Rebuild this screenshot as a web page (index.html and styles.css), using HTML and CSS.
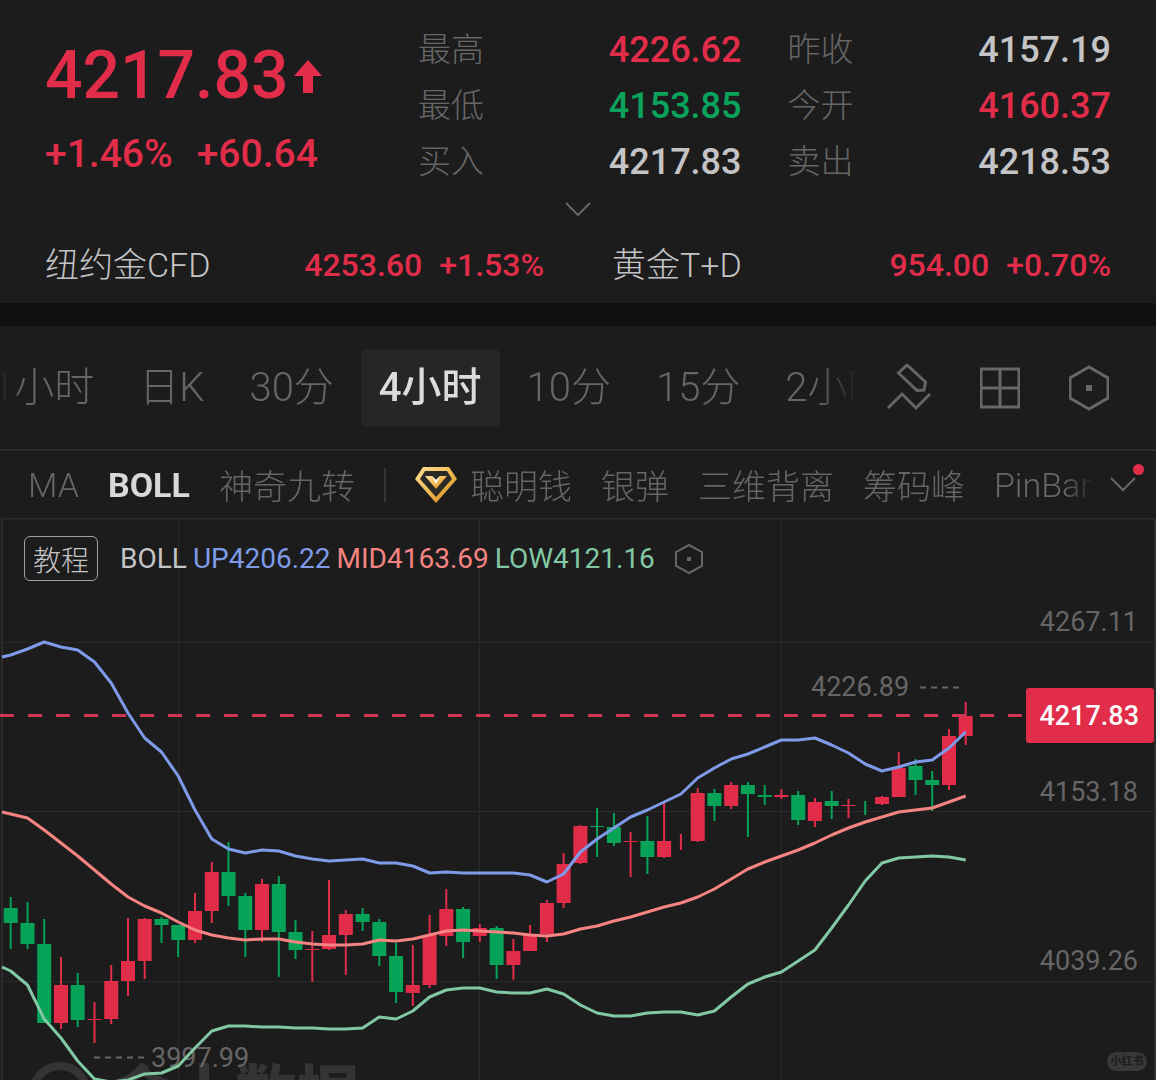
FILE: index.html
```
<!DOCTYPE html>
<html lang="zh-CN">

<head>
    <meta charset="UTF-8">
    <meta name="viewport" content="width=device-width, initial-scale=1.0">
    <title>现货黄金</title>
    <link rel="stylesheet" href="styles.css">
</head>

<body>
    <header class="quote">
        <div class="summary">
            <div class="price">
                <div class="last num">
                    <span>4217.83</span>
                    <svg class="arrow" viewBox="0 0 28 33">
                        <path d="M14 0L28 16H19V33H9V16H0z" />
                    </svg>
                </div>
                <div class="change num"><span>+1.46%</span><span>+60.64</span></div>
            </div>
            <dl class="detail">
                <div><dt>最高</dt><dd class="num up">4226.62</dd></div>
                <div><dt>昨收</dt><dd class="num">4157.19</dd></div>
                <div><dt>最低</dt><dd class="num down">4153.85</dd></div>
                <div><dt>今开</dt><dd class="num up">4160.37</dd></div>
                <div><dt>买入</dt><dd class="num">4217.83</dd></div>
                <div><dt>卖出</dt><dd class="num">4218.53</dd></div>
            </dl>
        </div>
        <button class="expand" type="button" aria-label="展开">
            <svg viewBox="0 0 26 14"><path d="M1 1l12 12L25 1" /></svg>
        </button>
        <div class="related">
            <a href="#" class="item">
                <span class="name">纽约金CFD</span>
                <span class="num up">4253.60</span>
                <span class="num up">+1.53%</span>
            </a>
            <a href="#" class="item">
                <span class="name">黄金T+D</span>
                <span class="num up">954.00</span>
                <span class="num up">+0.70%</span>
            </a>
        </div>
    </header>

    <nav class="period">
        <div class="tabs">
            <button type="button">1小时</button>
            <button type="button">日K</button>
            <button type="button">30分</button>
            <button type="button" class="active">4小时</button>
            <button type="button">10分</button>
            <button type="button">15分</button>
            <button type="button">2小时</button>
        </div>
        <div class="tools">
            <button type="button" aria-label="画线">
                <svg width="44" height="48" viewBox="0 0 44 48">
                    <path d="M20 1L38.500 18L37 26L30 26.500L11.500 9zM1 44L15 30L29 44L43 30" />
                </svg>
            </button>
            <button type="button" aria-label="布局">
                <svg width="40" height="48" viewBox="0 0 40 48">
                    <path d="M1 5H39V43H1zM20 5V43M1 24H39" />
                </svg>
            </button>
            <button type="button" aria-label="设置">
                <svg width="40" height="48" viewBox="0 0 40 48">
                    <path d="M20 3L39 14V34L20 45L1 34V14z" />
                    <rect class="dot" x="17" y="21" width="6" height="6" />
                </svg>
            </button>
        </div>
    </nav>

    <nav class="indicator">
        <div class="list">
            <button type="button">MA</button>
            <button type="button" class="active">BOLL</button>
            <button type="button">神奇九转</button>
            <i class="line"></i>
            <button type="button" class="vip">
                <svg width="42" height="38" viewBox="0 0 42 38">
                    <defs>
                        <linearGradient id="gold" x1="0" y1="0" x2="1" y2="1">
                            <stop offset="0" stop-color="#ffdf9a" />
                            <stop offset="0.5" stop-color="#f2bd55" />
                            <stop offset="1" stop-color="#c97f08" />
                        </linearGradient>
                    </defs>
                    <path fill="url(#gold)" d="M8 1H34L42 13L21 37L0 13z" />
                    <path fill="#2c2a27" d="M10 5H32L37 13L21 31L5 13z" />
                    <path fill="url(#gold)" d="M10 10H17L21 14L25 10H32L21 23z" />
                    <path fill="#fff" d="M17 10L21 18L25 10L21 14z" />
                </svg>
                聪明钱
            </button>
            <button type="button">银弹</button>
            <button type="button">三维背离</button>
            <button type="button">筹码峰</button>
            <button type="button">PinBar</button>
        </div>
        <button class="more" type="button" aria-label="更多指标">
            <svg viewBox="0 0 26 15"><path d="M1 1l12 12L25 1" /></svg>
        </button>
    </nav>

    <main class="chart">
        <div class="legend">
            <button type="button" class="course">教程</button>
            <span>BOLL</span>
            <span class="c-up">UP4206.22</span>
            <span class="c-mid">MID4163.69</span>
            <span class="c-low">LOW4121.16</span>
            <svg width="28" height="32" viewBox="0 0 28 32">
                <path d="M14 2L27 9V23L14 30L1 23V9z" />
                <rect class="dot" x="12" y="14" width="4" height="4" />
            </svg>
        </div>
        <svg class="kline" viewBox="0 518 1156 562">
            <g class="watermark">
                <circle cx="60" cy="1093" r="27" />
                <text x="111" y="1117">金十数据</text>
            </g>
            <path class="grid" d="M178.500 519V1080M479.500 519V1080M781.500 519V1080M2 642.500H1154M2 811.500H1154M2 981.500H1154" />
            <path class="frame" d="M0 518.500H1156M2 519V1080M1155 519V1080" />
            <g class="mark">
                <path d="M94 1057.500H145M920 687.500H961" />
                <text x="151" y="1067">3997.99</text>
                <text x="811" y="696">4226.89</text>
            </g>
            <g id="candles"></g>
            <path class="now" d="M0 715.500H1026" />
            <g id="lines"></g>
            <g class="axis">
                <text x="1138" y="631">4267.11</text>
                <text x="1138" y="801">4153.18</text>
                <text x="1138" y="970">4039.26</text>
                <rect x="1026" y="688" width="128" height="55" rx="3" />
                <text class="cur" x="1139" y="725">4217.83</text>
            </g>
        </svg>
        <span class="source">小红书</span>
    </main>

    <script src="script.js"></script>
</body>

</html>
```

FILE: styles.css
```
* {
    margin: 0;
    padding: 0;
    box-sizing: border-box;
}

body {
    background: #1c1c1d;
    color: #c4c4c6;
    font-family: Roboto, "Noto Sans CJK SC", sans-serif;
    font-weight: 300;
    overflow-x: hidden;
}

button {
    border: 0 none;
    background: none;
    color: inherit;
    font: inherit;
    white-space: nowrap;
    cursor: pointer;
}

a {
    color: inherit;
    text-decoration: none;
}

svg {
    display: block;
    fill: none;
    stroke: #666;
    stroke-width: 2;
}

svg .dot {
    fill: #666;
    stroke: none;
}

.num {
    font-weight: 500;
}

.up {
    color: #e12d4a;
}

.down {
    color: #0aa35c;
}

/* 报价 */
.quote {
    padding: 22px 45px 0;
    height: 326px;
    border-bottom: 23px solid #111112;
}

.summary {
    display: flex;
    justify-content: space-between;
}

.price {
    color: #e12d4a;
}

.last {
    display: flex;
    align-items: center;
    gap: 6px;
    font-size: 66px;
    line-height: 108px;
}

.arrow {
    width: 28px;
    height: 33px;
    fill: #e12d4a;
    stroke: none;
}

.change {
    display: flex;
    gap: 24px;
    font-size: 39px;
    line-height: 48px;
}

.detail {
    width: 65%;
    display: grid;
    grid-template-columns: 1fr 1fr;
    column-gap: 46px;
}

.detail div {
    display: flex;
    justify-content: space-between;
    line-height: 56px;
}

.detail dt {
    font-size: 33px;
    color: #666;
}

.detail dd {
    font-size: 36px;
}

.expand {
    display: block;
    margin: 12px auto 0;
}

.expand svg {
    width: 26px;
    height: 14px;
}

.related {
    display: grid;
    grid-template-columns: 1fr 1fr;
    column-gap: 68px;
    margin-top: 24px;
    line-height: 50px;
}

.item {
    display: flex;
    gap: 17px;
    font-size: 32px;
}

.item .name {
    flex: 1;
    font-size: 34px;
    white-space: nowrap;
}

/* 周期 */
.period {
    display: flex;
    align-items: center;
    height: 123px;
    padding-right: 47px;
    color: #666;
}

.tabs {
    flex: 1;
    min-width: 0;
    display: flex;
    gap: 9px;
    margin-left: -26px;
    overflow: hidden;
    -webkit-mask-image: linear-gradient(90deg, transparent 26px, #000 50px, #000 95%, transparent);
    mask-image: linear-gradient(90deg, transparent 26px, #000 50px, #000 95%, transparent);
}

.tabs button {
    flex: none;
    height: 78px;
    padding: 0 18px 7px;
    border-radius: 6px;
    font-size: 40px;
}

.tabs .active {
    background: #262627;
    color: #dcdcdc;
    font-weight: 500;
}

.tools {
    display: flex;
    gap: 49px;
    margin-left: 28px;
}

.tools svg {
    stroke-width: 3;
}

/* 指标 */
.indicator {
    display: flex;
    align-items: center;
    height: 69px;
    padding: 0 20px 0 28px;
    border-top: 2px solid #2c2c2d;
    color: #666;
    font-size: 34px;
}

.list {
    flex: 1;
    min-width: 0;
    display: flex;
    align-items: center;
    gap: 29px;
    overflow: hidden;
    -webkit-mask-image: linear-gradient(90deg, #000 97%, transparent);
    mask-image: linear-gradient(90deg, #000 97%, transparent);
}

.list button {
    flex: none;
}

.list .active {
    color: #d8d8da;
    font-weight: 700;
}

.line {
    flex: none;
    width: 2px;
    height: 34px;
    background: #363638;
}

.vip {
    display: flex;
    align-items: center;
    gap: 13px;
}

.vip svg {
    stroke: none;
}

.more {
    position: relative;
    margin-left: 14px;
}

.more svg {
    width: 26px;
    height: 15px;
}

.more::after {
    content: "";
    position: absolute;
    top: -13px;
    right: -8px;
    width: 11px;
    height: 11px;
    border-radius: 50%;
    background: #e12d4a;
}

/* 图表 */
.chart {
    position: relative;
}

.legend {
    position: absolute;
    top: 18px;
    left: 24px;
    display: flex;
    align-items: center;
    gap: 6px;
    font-size: 28px;
    font-weight: 400;
}

.legend .course {
    width: 74px;
    height: 45px;
    margin-right: 16px;
    border: 1px solid #a0a0a2;
    border-radius: 6px;
    font-weight: 300;
}

.legend svg {
    margin-left: 14px;
}

.c-up {
    color: #7f9be8;
}

.c-mid {
    color: #f58482;
}

.c-low {
    color: #82c8a5;
}

.kline {
    width: 100%;
    height: auto;
}

.kline text {
    font-size: 27px;
    font-weight: 400;
    fill: #666;
    stroke: none;
}

.kline .grid {
    stroke: #2a2a2b;
    stroke-width: 1;
}

.kline .frame {
    stroke: #2c2c2d;
}

.mark path {
    stroke-dasharray: 6 5;
}

.now {
    stroke: #cf3550;
    stroke-width: 3;
    stroke-dasharray: 14 14;
}

.rise {
    fill: #e12d4a;
    stroke: #e12d4a;
}

.fall {
    fill: #04a358;
    stroke: #04a358;
}

#candles rect {
    stroke: none;
}

.boll {
    stroke-width: 3;
    stroke-linejoin: round;
}

.boll-up {
    stroke: #7f9be8;
}

.boll-mid {
    stroke: #f58482;
}

.boll-low {
    stroke: #82c8a5;
}

.axis text {
    text-anchor: end;
}

.axis rect {
    fill: #e12d4a;
    stroke: none;
}

.axis .cur {
    fill: #fff;
    font-weight: 500;
}

.watermark circle {
    stroke: #343435;
    stroke-width: 8;
}

.kline .watermark text {
    font-size: 62px;
    font-weight: 900;
    fill: #343435;
}

.source {
    position: absolute;
    right: 9px;
    bottom: 9px;
    width: 40px;
    border-radius: 10px;
    background: #38383a;
    color: #1c1c1d;
    font-size: 11px;
    font-weight: 700;
    line-height: 19px;
    text-align: center;
}
```

FILE: script.js
```
// 每根K线: [涨跌, 最高, 实体上沿, 实体下沿, 最低]
const candles = [
    [0, 897, 908, 923, 949], [0, 902, 923, 944, 949], [0, 919, 944, 1023, 1023],
    [1, 957, 985, 1023, 1029], [0, 973, 985, 1020, 1027], [1, 1002, 1019, 1020, 1043],
    [1, 965, 981, 1019, 1024], [1, 918, 961, 981, 996], [1, 918, 919, 961, 979],
    [0, 917, 919, 925, 943], [0, 925, 925, 940, 957], [1, 893, 911, 940, 943],
    [1, 862, 872, 911, 923], [0, 842, 872, 896, 906], [0, 893, 896, 930, 957],
    [1, 879, 884, 930, 942], [0, 876, 884, 932, 977], [0, 920, 932, 950, 959],
    [1, 931, 949, 950, 982], [1, 880, 935, 949, 950], [1, 910, 914, 935, 975],
    [0, 908, 914, 922, 931], [0, 919, 922, 956, 966], [0, 943, 956, 992, 1003],
    [1, 945, 985, 993, 1006], [1, 915, 935, 985, 988], [1, 889, 909, 936, 946],
    [0, 907, 909, 942, 958], [1, 924, 928, 936, 942], [0, 926, 928, 965, 979],
    [1, 939, 951, 965, 980], [1, 925, 935, 951, 951], [1, 900, 903, 934, 942],
    [1, 853, 864, 903, 908], [1, 825, 826, 863, 864], [0, 808, 826, 827, 857],
    [0, 813, 827, 843, 846], [1, 832, 841, 842, 877], [0, 816, 841, 857, 874],
    [1, 803, 841, 857, 858], [1, 834, 841, 841, 850], [1, 788, 793, 841, 842],
    [0, 789, 793, 806, 821], [1, 782, 785, 806, 809], [0, 782, 785, 794, 837],
    [0, 785, 795, 797, 805], [1, 789, 795, 797, 799], [0, 791, 795, 820, 825],
    [1, 798, 802, 821, 827], [0, 791, 801, 806, 819], [1, 799, 805, 806, 818],
    [0, 801, 808, 808, 815], [1, 796, 797, 804, 805], [1, 752, 768, 797, 797],
    [0, 759, 766, 780, 795], [0, 771, 780, 785, 811], [1, 729, 736, 785, 790],
    [1, 702, 716, 736, 745]
];

// 布林线三条轨道
const boll = {
    up: [655, 649, 642, 647, 650, 662, 683, 713, 738, 752, 776, 810, 839, 849, 853, 850, 851, 856,
        859, 861, 860, 859, 863, 863, 866, 873, 872, 873, 873, 873, 873, 875, 882, 874, 852, 839,
        828, 817, 810, 802, 794, 778, 768, 759, 754, 747, 740, 740, 738, 745, 753, 764, 771, 767,
        762, 760, 748, 732],
    mid: [814, 818, 830, 843, 856, 870, 884, 897, 906, 913, 922, 930, 935, 938, 940, 939, 939, 942,
        944, 945, 945, 944, 940, 941, 939, 935, 931, 930, 931, 932, 933, 935, 936, 934, 929, 926,
        921, 917, 912, 907, 903, 897, 889, 879, 869, 862, 856, 850, 843, 835, 828, 822, 817, 812,
        810, 808, 802, 796],
    low: [971, 985, 1019, 1038, 1061, 1079, 1082, 1080, 1074, 1073, 1066, 1048, 1031, 1026, 1026,
        1027, 1027, 1028, 1028, 1029, 1029, 1028, 1017, 1019, 1011, 997, 990, 988, 988, 992, 993,
        993, 989, 994, 1005, 1013, 1016, 1016, 1013, 1012, 1012, 1015, 1011, 997, 984, 977, 972,
        961, 950, 928, 905, 881, 863, 858, 857, 856, 857, 860]
};
const start = { up: 657, mid: 812, low: 967 };

// 第一根K线中心和间距
const first = 10.7;
const step = 16.755;

function x(i) {
    return (first + i * step).toFixed(1);
}

let html = '';
candles.forEach(function (item, i) {
    const [rise, high, top, bottom, low] = item;
    html += `<g class="${rise ? 'rise' : 'fall'}"><path d="M${x(i)} ${high}V${low}" />`;
    if (bottom > top) {
        html += `<rect x="${(x(i) - 7).toFixed(1)}" y="${top}" width="14" height="${bottom - top}" />`;
    }
    html += '</g>';
});
document.querySelector('#candles').innerHTML = html;

html = '';
for (const key in boll) {
    const points = boll[key].map((y, i) => `${x(i)},${y}`).join(' ');
    html += `<polyline class="boll boll-${key}" points="2,${start[key]} ${points}" />`;
}
document.querySelector('#lines').innerHTML = html;
```
